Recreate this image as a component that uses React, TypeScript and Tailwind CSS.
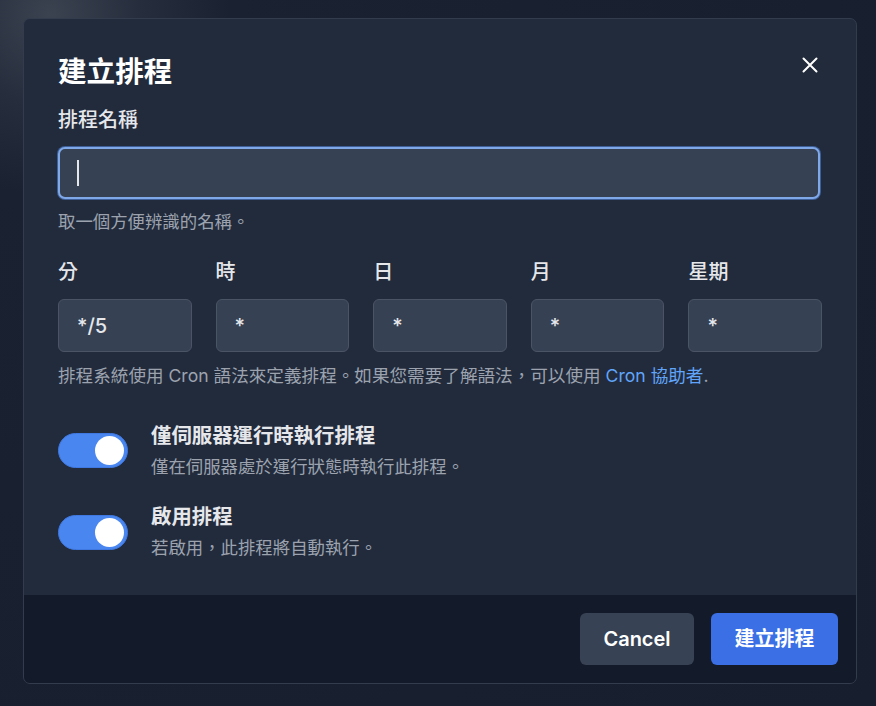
import React from "react";

const fontStack = { fontFamily: 'Inter, "Noto Sans CJK TC", "Noto Sans", sans-serif' };

function Toggle() {
  return (
    <div className="mt-[11px] flex h-[35px] w-[70px] shrink-0 items-center justify-end rounded-full border border-[#3f78e0] bg-[#4a86f0] pr-[3px]">
      <div className="h-[29px] w-[29px] rounded-full bg-white" />
    </div>
  );
}

export default function App() {
  const fields = [
    { label: "分", value: "*/5" },
    { label: "時", value: "*" },
    { label: "日", value: "*" },
    { label: "月", value: "*" },
    { label: "星期", value: "*" },
  ];
  return (
    <div
      style={fontStack}
      className="h-[706px] w-[876px] overflow-hidden bg-[radial-gradient(circle_at_50px_15px,#3b4250_0%,#262d3c_90px,#1a2131_180px,#171e2d_100%)] pl-[23px] pt-[18px]"
    >
      <div className="flex h-[666px] w-[834px] flex-col overflow-hidden rounded-[7px] border border-[#323c4d] bg-[#222b3c]">
        <div className="relative flex-1 px-[34px] pt-[35px]">
          <button className="absolute right-[38px] top-[38px] flex h-[16px] w-[16px] items-center justify-center text-white">
            <svg width="16" height="16" viewBox="0 0 16 16" fill="none" stroke="currentColor" strokeWidth="2" strokeLinecap="round">
              <path d="M1.5 1.5L14.5 14.5M14.5 1.5L1.5 14.5" />
            </svg>
          </button>
          <h1 className="text-[28.6px] font-bold leading-[36px] text-white">建立排程</h1>
          <div className="mt-[16px] text-[20px] font-medium leading-[28px] text-[#e5e7eb]">排程名稱</div>
          <div className="mt-[13px] flex h-[52px] w-[762px] items-center rounded-[7px] border-2 border-[#7ea8e8] bg-[#364154] px-[17px] shadow-[0_0_0_1px_#3e5f98]">
            <div className="h-[26px] w-[1.5px] bg-[#e5e7eb]" />
          </div>
          <div className="mt-[11px] text-[17.4px] leading-[24px] text-[#9ca3af]">取一個方便辨識的名稱。</div>
          <div className="mt-[24px] grid grid-cols-5 gap-x-[24px]">
            {fields.map((f) => (
              <div key={f.label} className="flex flex-col">
                <div className="text-[20px] font-medium leading-[28px] text-[#e5e7eb]">{f.label}</div>
                <div className="mt-[13px] flex h-[53px] items-center rounded-[6px] border border-[#4a5465] bg-[#364154] px-[18px] text-[20px] font-medium text-[#e5e7eb]">
                  {f.value}
                </div>
              </div>
            ))}
          </div>
          <div className="mt-[12px] text-[17.6px] leading-[24px] text-[#9ca3af]">
            排程系統使用 Cron 語法來定義排程。如果您需要了解語法，可以使用 <span className="text-[#60a5fa]">Cron 協助者</span>.
          </div>
          <div className="mt-[34px] flex gap-[23px]">
            <Toggle />
            <div className="flex flex-col">
              <div className="text-[20.4px] font-semibold leading-[28px] text-[#e5e7eb]">僅伺服器運行時執行排程</div>
              <div className="mt-[5px] text-[17.4px] leading-[24px] text-[#9ca3af]">僅在伺服器處於運行狀態時執行此排程。</div>
            </div>
          </div>
          <div className="mt-[24px] flex gap-[23px]">
            <div className="mt-px"><Toggle /></div>
            <div className="flex flex-col">
              <div className="text-[20.4px] font-semibold leading-[28px] text-[#e5e7eb]">啟用排程</div>
              <div className="mt-[5px] text-[17.4px] leading-[24px] text-[#9ca3af]">若啟用，此排程將自動執行。</div>
            </div>
          </div>
        </div>
        <div className="flex h-[88px] items-center justify-end gap-[17px] bg-[#131a2a] pr-[18px]">
          <button className="flex h-[52px] w-[114px] items-center justify-center rounded-[6px] bg-[#374254] text-[20px] font-semibold text-white">
            Cancel
          </button>
          <button className="flex h-[52px] w-[127px] items-center justify-center rounded-[6px] bg-[#3a6fe6] text-[20px] font-semibold text-white">
            建立排程
          </button>
        </div>
      </div>
    </div>
  );
}
